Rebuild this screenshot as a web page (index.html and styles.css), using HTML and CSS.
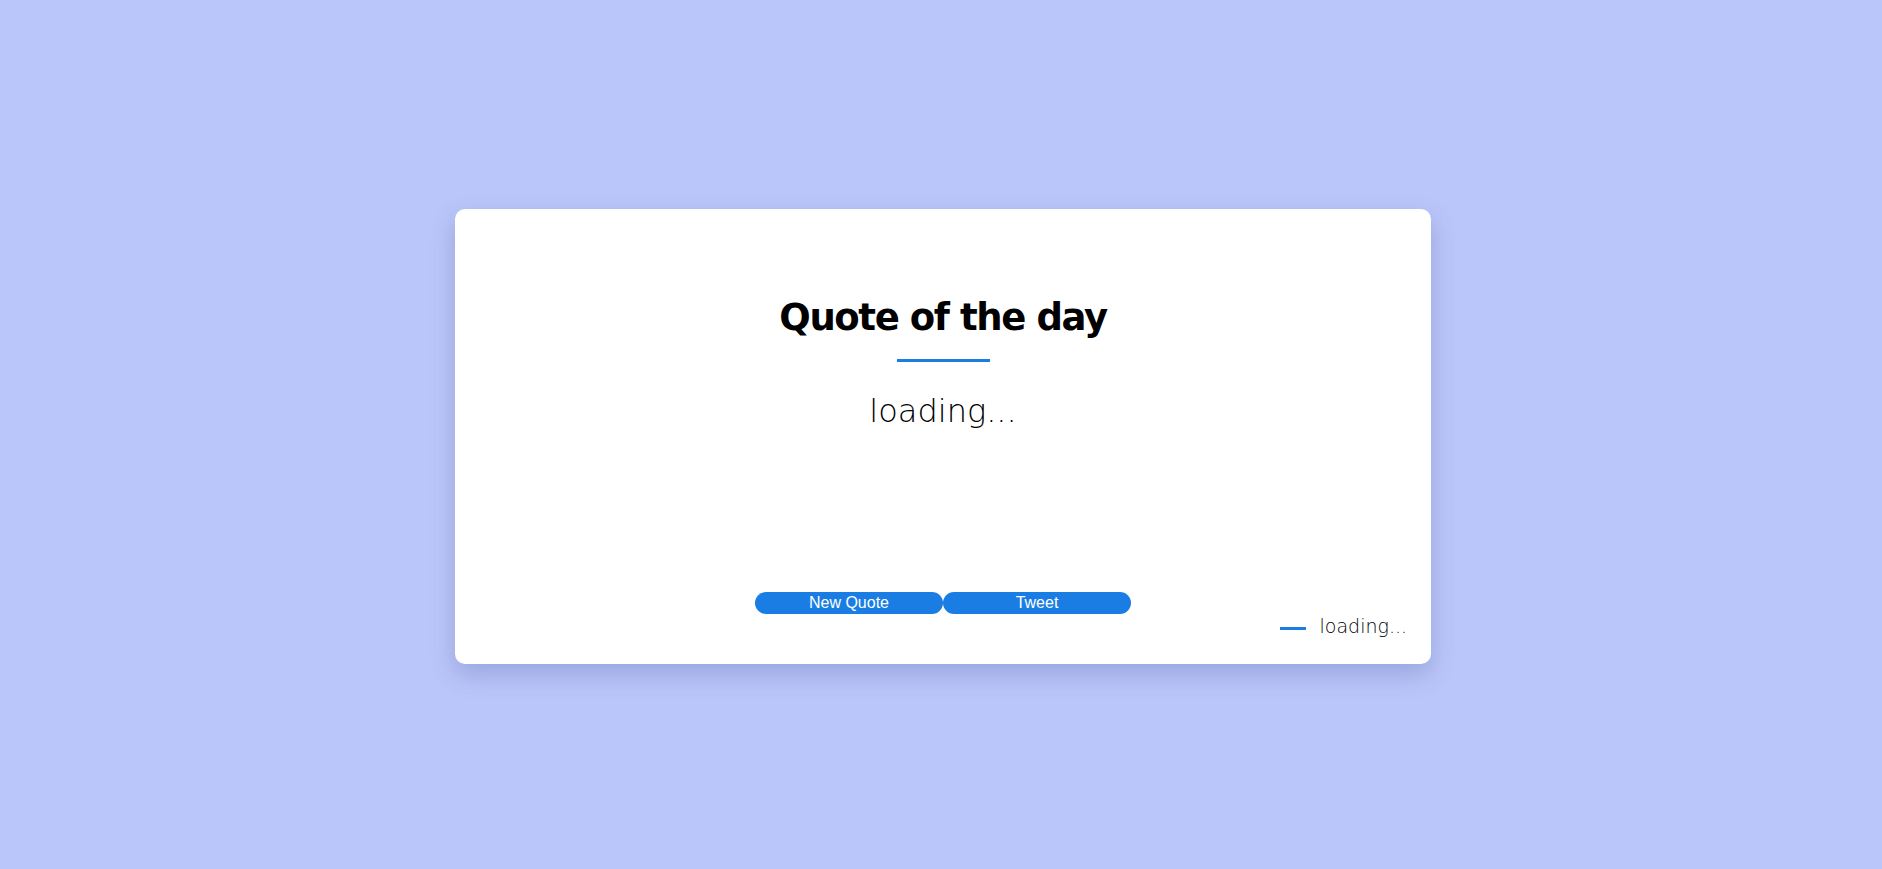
FILE: index.html
```html
<!DOCTYPE html>
<html lang="en">
<head>
<meta charset="utf-8">
<title>Quote of the day</title>
<link rel="stylesheet" href="styles.css">
</head>
<body>
<main class="card">
  <h1 class="title">Quote of the day</h1>
  <div class="rule"></div>
  <p class="quote">loading...</p>
  <div class="actions">
    <button class="btn">New Quote</button>
    <button class="btn">Tweet</button>
  </div>
  <div class="author">
    <span class="dash"></span>
    <span class="author-name">loading...</span>
  </div>
</main>
</body>
</html>
```
FILE: styles.css
```css
html, body {
  margin: 0;
  padding: 0;
}
body {
  height: 100vh;
  background: #bac6f9;
  display: flex;
  align-items: center;
  justify-content: center;
  font-family: "DejaVu Sans", "Lato", sans-serif;
}
.card {
  box-sizing: border-box;
  width: 976px;
  height: 455px;
  margin-left: 4px;
  margin-top: 4px;
  background: #ffffff;
  border-radius: 10px;
  box-shadow: 0 10px 24px rgba(70, 80, 150, 0.28);
  display: flex;
  flex-direction: column;
  align-items: center;
  padding: 87px 24px 26px;
}
.title {
  margin: 0;
  font-size: 37px;
  line-height: 44px;
  font-weight: 700;
  letter-spacing: -1.4px;
  color: #000;
}
.rule {
  width: 93px;
  height: 3px;
  background: #1a7de3;
  margin-top: 19px;
}
.quote {
  margin: 30px 0 0;
  font-size: 32px;
  line-height: 38px;
  font-weight: 200;
  color: #000;
}
.actions {
  margin-top: auto;
  display: flex;
}
.btn {
  width: 188px;
  height: 22px;
  border: none;
  border-radius: 11px;
  background: #1a7de3;
  color: #fff;
  font-family: "Liberation Sans", Arial, sans-serif;
  font-size: 16px;
  padding: 0;
}
.author {
  align-self: flex-end;
  display: flex;
  align-items: center;
  gap: 14px;
}
.dash {
  width: 26px;
  height: 3px;
  background: #1a7de3;
  margin-top: 4px;
}
.author-name {
  font-size: 19px;
  line-height: 24px;
  font-weight: 200;
  color: #000;
}
```
